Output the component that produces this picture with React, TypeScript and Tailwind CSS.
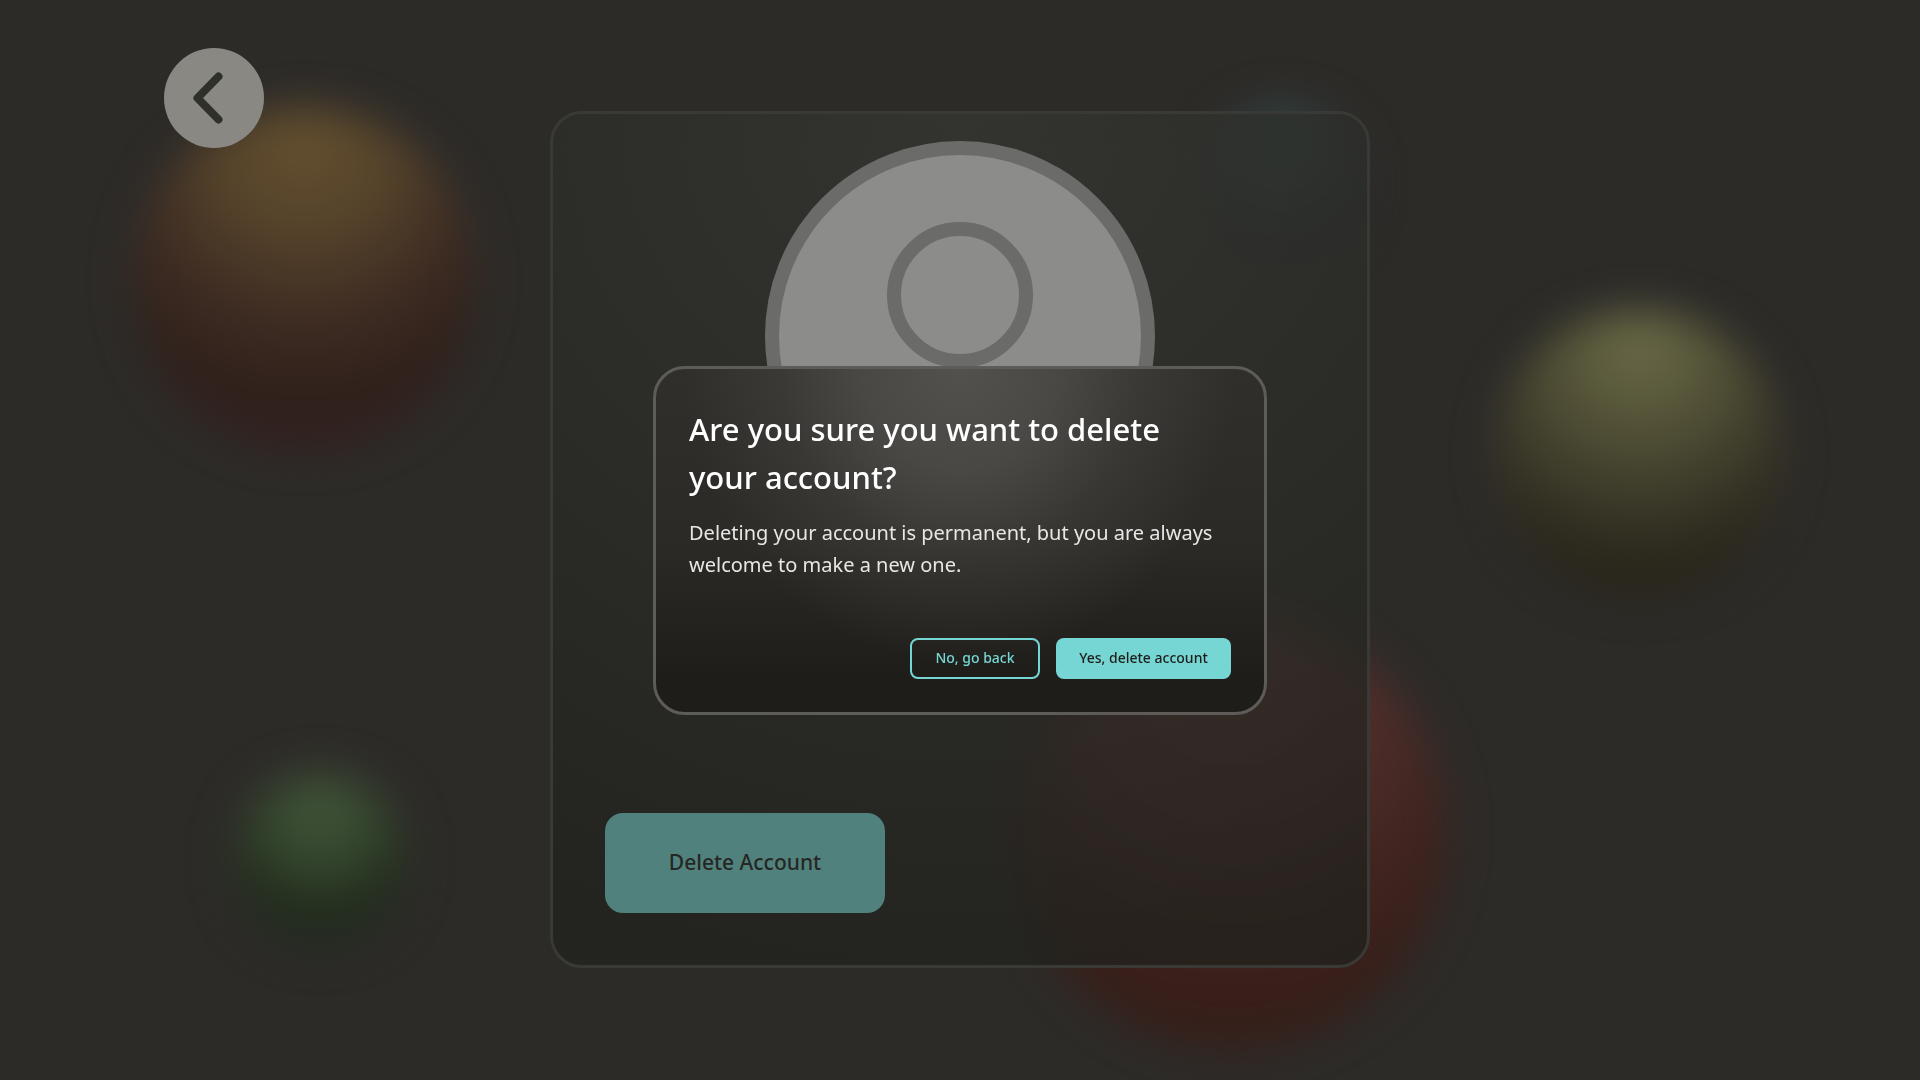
import React from "react";

const balloons = [
  "left-[133px] top-[108px] size-[342px] bg-[radial-gradient(ellipse_85%_88%_at_50%_8%,#65502f_0%,#56442b_30%,#3f2d23_60%,#30211b_85%,#32201f_100%)] blur-[20px]",
  "left-[1495px] top-[310px] size-[288px] bg-[radial-gradient(ellipse_85%_84%_at_50%_12%,#6b6b48_0%,#535237_34%,#3a3828_66%,#28251a_95%)] blur-[20px]",
  "left-[234px] top-[774px] size-[172px] bg-[radial-gradient(ellipse_80%_80%_at_50%_16%,#43583a_0%,#36482f_40%,#222d1d_80%,#20291f_100%)] blur-[22px]",
  "left-[1202px] top-[104px] size-[160px] bg-[radial-gradient(ellipse_75%_90%_at_50%_8%,#324445_0%,#2d3a3a_40%,#2a2a2c_80%,#2a2a2c_100%)] blur-[20px]",
  "left-[1017px] top-[618px] size-[430px] bg-[radial-gradient(ellipse_85%_84%_at_50%_12%,#5c3532_0%,#4e2d2a_40%,#40241f_68%,#371e19_95%)] blur-[20px]",
];

function Backdrop() {
  return (
    <div aria-hidden="true" className="absolute inset-0 overflow-hidden">
      {balloons.map((b) => (
        <div key={b} className={`absolute rounded-full ${b}`} />
      ))}
    </div>
  );
}

function Avatar() {
  return (
    <svg viewBox="0 0 390 390" className="size-[390px] self-center" role="img" aria-label="Profile picture">
      <defs>
        <clipPath id="avatar-clip">
          <circle cx="195" cy="195" r="182" />
        </clipPath>
      </defs>
      <circle cx="195" cy="195" r="188" fill="#8c8c8a" stroke="#6b6b69" strokeWidth="14" />
      <circle cx="195" cy="154" r="66" fill="none" stroke="#6b6b69" strokeWidth="14" />
      <path clipPath="url(#avatar-clip)" d="M75 366a120 120 0 0 1 240 0" fill="none" stroke="#6b6b69" strokeWidth="14" />
    </svg>
  );
}

export default function App() {
  return (
    <div className="relative min-h-screen bg-[#2d2b28] font-['Noto_Sans','Open_Sans',sans-serif]">
      <Backdrop />
      <div className="relative grid min-h-screen grid-cols-[1fr_minmax(0,820px)_1fr]">
        <header className="flex items-start pt-12 pl-[164px]">
          <button aria-label="Go back" className="flex size-[100px] shrink-0 items-center justify-center rounded-full bg-[#898883]">
            <svg viewBox="0 0 100 100" className="size-full" fill="none" stroke="#30302b" strokeWidth="8" strokeLinecap="round" strokeLinejoin="round">
              <path d="M54.5 28.5L33.5 50L54.5 71.5" />
            </svg>
          </button>
        </header>
        <main className="mt-[111px] mb-[112px] flex flex-col justify-between rounded-[32px] border-[3px] border-[#393a35] bg-[radial-gradient(ellipse_110%_100%_at_50%_0%,#363732bf_0%,#2b2c28bf_55%,#21221ebf_100%)] px-[52px] pt-[27px] pb-[52px] backdrop-blur-lg">
          <Avatar />
          <button className="h-[100px] w-[280px] rounded-[18px] bg-[#51817d] text-[21px] font-medium text-[#262724]">
            Delete Account
          </button>
        </main>
      </div>
      <div className="absolute inset-0 flex items-center justify-center">
        <section
          role="dialog"
          aria-modal="true"
          aria-labelledby="dialog-title"
          className="w-full max-w-[614px] rounded-[32px] border-[3px] border-[#5d5c58] bg-[radial-gradient(ellipse_45%_85%_at_50%_0%,#52514d_0%,#52514dbf_35%,#52514d4d_65%,#52514d00_100%),linear-gradient(#302f2b_0%,#2b2a26_50%,#1e1d19_90%)] bg-origin-border px-[33px] pt-9 pb-[33px]"
        >
          <h1 id="dialog-title" className="text-[31px] leading-[48px] font-medium text-white">
            Are you sure you want to delete your account?
          </h1>
          <p className="mt-4 text-[20px] leading-[32px] font-normal text-[#e8e7e5]">
            Deleting your account is permanent, but you are always welcome to make a new one.
          </p>
          <div className="mt-[57px] flex justify-end gap-4">
            <button className="h-[41px] w-[130px] rounded-lg border-2 border-[#76d6d4] text-sm font-medium text-[#76d6d4]">
              No, go back
            </button>
            <button className="h-[41px] w-[175px] rounded-lg bg-[#76d6d4] text-sm font-medium text-[#1e1d19]">
              Yes, delete account
            </button>
          </div>
        </section>
      </div>
    </div>
  );
}
